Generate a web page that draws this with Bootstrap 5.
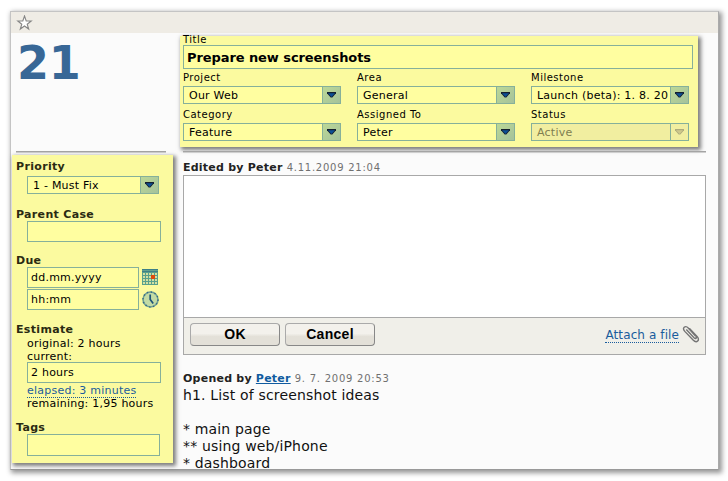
<!DOCTYPE html>
<html lang="en">
<head>
<meta charset="utf-8">
<meta name="viewport" content="width=device-width, initial-scale=1">
<title>Case 21</title>
<link rel="stylesheet" href="https://cdn.jsdelivr.net/npm/bootstrap@5.3.0/dist/css/bootstrap.min.css">
<style>
body{background:#fff;font:11px/13px Verdana,"DejaVu Sans",sans-serif;letter-spacing:.23px;color:#000;height:481px;overflow:hidden;padding:11px 0 0 10px}
.win{width:709px;height:459px;background:#fbfbfb;border:1px solid #c4c4c4;border-right:1px solid #aaa;border-bottom-color:#999;box-shadow:2px 2px 5px 1px rgba(0,0,0,.42)}
.topbar{height:21px;background:#efece5;padding:3px 0 0 5px}
.side{width:162px;flex:none}
.side-head{height:122px;padding:2px 0 0 5px}
.num{font-size:46px;line-height:56px;font-weight:700;color:#386796;height:117px;width:150px;border-bottom:1px solid #a4a4a4;box-shadow:0 1px 0 #cfcfcf;padding-left:1px;letter-spacing:-.3px}
.note{background:#fbfa9f;box-shadow:2px 2px 4px 1px rgba(0,0,0,.5)}
.side-note{height:308px;width:161px;margin-left:1px;padding:5px 0 0 4px}
.side-note .ind{margin-left:11px}
.hd{font-weight:700;height:13px;line-height:13px;color:#2a2a12;letter-spacing:.33px}
.fld{display:block;border:1px solid #86b09a;background:#fffea0;border-radius:0;padding:0 0 0 3px;height:21px;font:inherit;line-height:19px;letter-spacing:inherit;outline:0;color:#000}
.w134{width:134px}.w112{width:112px}
.sel{border:1px solid #86b09a;background:#fffea0;height:18px;width:158px;line-height:17px}
.sel .val{padding-left:5px;overflow:hidden;white-space:nowrap;flex:1 1 0;min-width:0}
.sel .arr{width:18px;background:linear-gradient(135deg,#bcd896,#a5c29b);border-left:1px solid #86b09a}
.sel.off{background:#f1eea0;color:#807e50}
.sel.off .arr{background:#f1eea0}
.sel.pri{width:132px;margin-top:3px}
.t1{margin-top:14px}.t2{margin-top:12px}.due+.due{margin-top:1px}.t3{margin-top:13px}
.ico{margin:2px 0 0 3px}
.est{height:25px;margin-top:1px}.est2{margin-top:1px}.t4{margin-top:11px}.tags{width:133px;height:22px}
.main-col{width:527px;margin-left:7px;flex:none}
.title-note{width:518px;height:111px;margin-top:3px;padding:0 3px}
.lab{font-size:10px;line-height:13px;height:15px;letter-spacing:.5px}
.lab.l0{height:9px;line-height:8px}
.r1{margin-top:2px}.r2{margin-top:4px}
.cols{gap:16px}
.title-f{width:510px;height:24px;font-size:13px;font-weight:700;line-height:23px;letter-spacing:-.08px}
.rule{margin:4px 0 0 3px;width:523px;height:2px;background:#a4a4a4;border-bottom:1px solid #cfcfcf}
.ev{margin-left:3px;width:523px}
.ev1{margin-top:8px}.ev2{margin-top:17px}
.ev-h{font-weight:700;color:#222;height:14px}
.ev-h time{font-weight:400;font-size:10px;color:#707070;letter-spacing:.75px}
.edit{border:1px solid #a8a8a8;height:180px}
.edit textarea{display:block;width:100%;height:141px;border:0;outline:0;resize:none;background:#fff}
.edit-f{height:37px;background:#f0efe9;border-top:1px solid #a8a8a8;padding:0 5px 3px 6px}
.b{width:90px;height:23px;padding:0;border:1px solid #999;border-radius:4px;background:linear-gradient(#f3f1ec 45%,#e3e0d8 60%);font:bold 14px/21px "Liberation Sans",Arial,sans-serif;color:#000;border-color:#aaa #888 #888 #aaa;letter-spacing:.3px}
.b2{margin-left:5px}
.lk{color:#1a5c9c;text-decoration:none;border-bottom:1px dotted #1a5c9c}
.lk2{color:#105ba0}
.att{font-size:12px;line-height:13px;letter-spacing:.1px;margin-top:2px}
.clip{margin:-2px 0 0 3px}
.body-t{font-size:14px;line-height:17px;letter-spacing:.16px;color:#111;white-space:pre;margin:1px 0 0;font-family:inherit;overflow:hidden;height:84px}
svg{display:block;flex:none}
</style>
<script src="https://cdn.jsdelivr.net/npm/bootstrap@5.3.0/dist/js/bootstrap.bundle.min.js"></script>
</head>
<body>
<svg width="0" height="0" class="position-absolute"><defs><g id="dn"><path d="M0 0h9v1.300L5.300 5.500H3.700L0 1.300z" fill="#152030"/><path d="M1 1.200h7L4.500 5z" fill="#0c4f96"/></g></defs></svg>
<div class="win">
  <div class="topbar"><svg width="17" height="16" viewBox="0 0 17 16"><path d="M8.500 1l1.700 5h5l-4 3.200 1.500 4.800-4.200-3-4.200 3 1.500-4.800-4-3.200h5z" fill="#fff" stroke="#858585" stroke-width="1.100"/></svg></div>
  <div class="d-flex">
    <aside class="side">
      <div class="side-head"><div class="num">21</div></div>
      <div class="side-note note">
        <div class="hd">Priority</div>
        <div class="sel pri d-flex ind"><span class="val">1 - Must Fix</span><span class="arr d-flex align-items-center justify-content-center"><svg width="9" height="6"><use href="#dn"/></svg></span></div>
        <div class="hd t1">Parent Case</div>
        <input class="fld w134 ind" aria-label="Parent case">
        <div class="hd t2">Due</div>
        <div class="d-flex ind due"><input class="fld w112" value="dd.mm.yyyy" aria-label="Due date">
          <svg class="ico" width="16" height="16" viewBox="0 0 16 16"><rect width="16" height="16" fill="#58a08c"/><rect width="16" height="3" fill="#3d7f86"/><rect y="1" width="16" height="1" fill="#62a08f"/><g fill="#d3e0a0"><path d="M1 4h2v2H1zM4 4h2v2H4zM7 4h2v2H7zM10 4h2v2h-2zM13 4h2v2h-2zM1 7h2v2H1zM4 7h2v2H4zM7 7h2v2H7zM13 7h2v2h-2zM1 10h2v2H1zM4 10h2v2H4zM7 10h2v2H7zM10 10h2v2h-2zM13 10h2v2h-2zM1 13h2v2H1zM4 13h2v2H4zM7 13h2v2H7zM10 13h2v2h-2zM13 13h2v2h-2z"/></g><rect x="9" y="6" width="4" height="4" fill="#dc4b0c"/></svg></div>
        <div class="d-flex ind due"><input class="fld w112" value="hh:mm" aria-label="Due time">
          <svg class="ico" width="17" height="17" viewBox="0 0 17 17"><circle cx="8.500" cy="8.500" r="7.500" fill="#c3dba5" stroke="#6f9f8f" stroke-width="1.600"/><circle cx="8.500" cy="8.500" r="7.500" fill="none" stroke="#34688a" stroke-width="1.500" stroke-dasharray="1.300 2.627"/><path d="M8.200 3.500v5l3 4" fill="none" stroke="#1d5478" stroke-width="1.700"/></svg></div>
        <div class="hd t3">Estimate</div>
        <div class="ind est"><div>original: 2 hours</div><div>current:</div></div>
        <input class="fld w134 ind" value="2 hours" aria-label="Current estimate">
        <div class="ind est2"><div><a class="lk" href="#">elapsed: 3 minutes</a></div><div>remaining: 1,95 hours</div></div>
        <div class="hd t4">Tags</div>
        <input class="fld ind tags" aria-label="Tags">
      </div>
    </aside>
    <main class="main-col">
      <section class="title-note note">
        <div class="lab l0">Title</div>
        <input class="fld title-f" value="Prepare new screenshots" aria-label="Title">
        <div class="d-flex cols r1">
          <div><div class="lab">Project</div><div class="sel d-flex"><span class="val">Our Web</span><span class="arr d-flex align-items-center justify-content-center"><svg width="9" height="6"><use href="#dn"/></svg></span></div></div>
          <div><div class="lab">Area</div><div class="sel d-flex"><span class="val">General</span><span class="arr d-flex align-items-center justify-content-center"><svg width="9" height="6"><use href="#dn"/></svg></span></div></div>
          <div><div class="lab">Milestone</div><div class="sel d-flex"><span class="val">Launch (beta): 1. 8. 20</span><span class="arr d-flex align-items-center justify-content-center"><svg width="9" height="6"><use href="#dn"/></svg></span></div></div>
        </div>
        <div class="d-flex cols r2">
          <div><div class="lab">Category</div><div class="sel d-flex"><span class="val">Feature</span><span class="arr d-flex align-items-center justify-content-center"><svg width="9" height="6"><use href="#dn"/></svg></span></div></div>
          <div><div class="lab">Assigned To</div><div class="sel d-flex"><span class="val">Peter</span><span class="arr d-flex align-items-center justify-content-center"><svg width="9" height="6"><use href="#dn"/></svg></span></div></div>
          <div><div class="lab">Status</div><div class="sel off d-flex"><span class="val">Active</span><span class="arr d-flex align-items-center justify-content-center"><svg width="9" height="6"><path d="M0 0h9v1.300L5.300 5.500H3.700L0 1.300z" fill="#aeab7c"/><path d="M1 1.200h7L4.500 5z" fill="#cfc98c"/></svg></span></div></div>
        </div>
      </section>
      <div class="rule"></div>
      <section class="ev ev1">
        <div class="ev-h">Edited by Peter <time>4.11.2009 21:04</time></div>
        <div class="edit"><textarea aria-label="Comment"></textarea>
          <div class="edit-f d-flex align-items-center"><button class="b">OK</button><button class="b b2">Cancel</button><a class="lk att ms-auto" href="#">Attach a file</a>
            <svg width="18" height="18" viewBox="0 0 18 18" class="clip"><path d="M13.500 11L6.500 3.200C5.200 1.800 3.300 1.300 2.200 2.300S1.600 5 2.800 6.400l8.300 8.700c1.400 1.400 3.400 2 4.600.9 1.200-1.100.7-3-.4-4.200L7.500 3.600M4.300 4.600L12 12.800c.7.700 1.600 1 2 .6s.2-1.300-.5-2" fill="none" stroke="#747474" stroke-width="1.400"/></svg>
          </div></div>
      </section>
      <section class="ev ev2">
        <div class="ev-h">Opened by <a class="lk2" href="#">Peter</a> <time>9. 7. 2009 20:53</time></div>
        <pre class="body-t">h1. List of screenshot ideas

* main page
** using web/iPhone
* dashboard</pre>
      </section>
    </main>
  </div>
</div>
</body>
</html>
